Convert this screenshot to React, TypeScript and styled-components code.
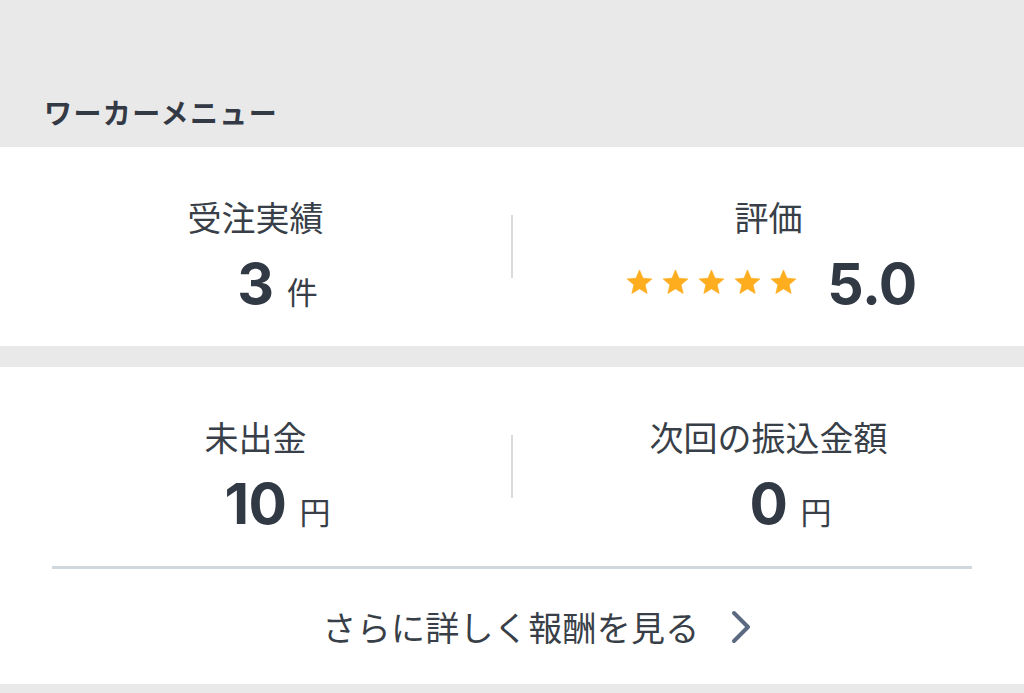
import React from "react";
import styled, { createGlobalStyle } from "styled-components";

const Global = createGlobalStyle`
  html, body { margin: 0; padding: 0; }
  body {
    background: #e9e9e9;
    font-family: "Noto Sans CJK JP", "Noto Sans", sans-serif;
    color: #343a45;
  }
`;

const Page = styled.div`
  display: flex;
  flex-direction: column;
  min-height: 693px;
  background: #e9e9e9;
`;

const SectionTitle = styled.h2`
  margin: 0;
  padding: 92px 0 15px 44px;
  font-size: 28px;
  line-height: 40px;
  font-weight: 700;
  color: #343a45;
  letter-spacing: 1.4px;
`;

const Card = styled.section<{ $gapAfter?: number }>`
  background: #ffffff;
  margin-bottom: ${(p) => p.$gapAfter ?? 0}px;
`;

const StatsGrid = styled.div<{ $padBottom?: number }>`
  display: grid;
  grid-template-columns: 1fr 2px 1fr;
  padding: 46px 0 ${(p) => p.$padBottom ?? 0}px;
`;

const Stat = styled.div`
  display: flex;
  flex-direction: column;
  align-items: center;
`;

const StatLabel = styled.div`
  font-size: 34px;
  line-height: 48px;
  font-weight: 400;
  color: #393f48;
`;

const ValueRow = styled.div<{ $shift?: number }>`
  display: flex;
  align-items: baseline;
  margin-top: 15px;
  padding-left: ${(p) => p.$shift ?? 0}px;
`;

const Number = styled.span`
  font-family: Inter, "Liberation Sans", sans-serif;
  font-size: 57px;
  line-height: 56px;
  font-weight: 700;
  color: #313945;
  letter-spacing: -0.5px;
`;

const Unit = styled.span`
  font-size: 31px;
  line-height: 30px;
  margin-left: 13px;
  color: #393f48;
`;

const RatingRow = styled.div`
  display: flex;
  align-items: center;
  margin-top: 15px;
  height: 56px;
  gap: 30px;
  padding-left: 6px;
`;

const Stars = styled.div`
  display: flex;
  gap: 9px;
  margin-top: -4px;
`;

const VRule = styled.div`
  width: 2px;
  height: 63px;
  margin-top: 22px;
  background: #d9dadc;
`;

const HRule = styled.hr`
  margin: 34px 52px 0;
  border: none;
  height: 3px;
  background: #d0d7dd;
`;

const LinkRow = styled.a`
  display: flex;
  align-items: center;
  justify-content: center;
  gap: 30px;
  height: 115px;
  font-size: 34px;
  color: #393f48;
  text-decoration: none;
  letter-spacing: 0.3px;
  padding-left: 50px;
`;

const Star = () => (
  <svg width="27" height="26" viewBox="0 0 24 23">
    <path
      d="M12 0.8l3.1 7.3 7.9 0.7-6 5.2 1.8 7.7L12 17.6l-6.8 4.1 1.8-7.7-6-5.2 7.9-0.7z"
      fill="#fdad1e"
      stroke="#fdad1e"
      strokeWidth="0.6"
      strokeLinejoin="round"
    />
  </svg>
);

const Chevron = () => (
  <svg width="22" height="34" viewBox="0 0 22 34">
    <polyline
      points="4,3 18,17 4,31"
      fill="none"
      stroke="#5b6a80"
      strokeWidth="4"
      strokeLinecap="round"
      strokeLinejoin="round"
    />
  </svg>
);

export default function App() {
  return (
    <Page>
      <Global />
      <SectionTitle>ワーカーメニュー</SectionTitle>
      <Card $gapAfter={21}>
        <StatsGrid $padBottom={34}>
          <Stat>
            <StatLabel>受注実績</StatLabel>
            <ValueRow $shift={44}>
              <Number>3</Number>
              <Unit>件</Unit>
            </ValueRow>
          </Stat>
          <VRule />
          <Stat>
            <StatLabel>評価</StatLabel>
            <RatingRow>
              <Stars>
                {[0, 1, 2, 3, 4].map((i) => (
                  <Star key={i} />
                ))}
              </Stars>
              <Number>5.0</Number>
            </RatingRow>
          </Stat>
        </StatsGrid>
      </Card>
      <Card $gapAfter={8}>
        <StatsGrid>
          <Stat>
            <StatLabel>未出金</StatLabel>
            <ValueRow $shift={44}>
              <Number>10</Number>
              <Unit>円</Unit>
            </ValueRow>
          </Stat>
          <VRule />
          <Stat>
            <StatLabel>次回の振込金額</StatLabel>
            <ValueRow $shift={44}>
              <Number>0</Number>
              <Unit>円</Unit>
            </ValueRow>
          </Stat>
        </StatsGrid>
        <HRule />
        <LinkRow href="#">
          さらに詳しく報酬を見る
          <Chevron />
        </LinkRow>
      </Card>
    </Page>
  );
}
